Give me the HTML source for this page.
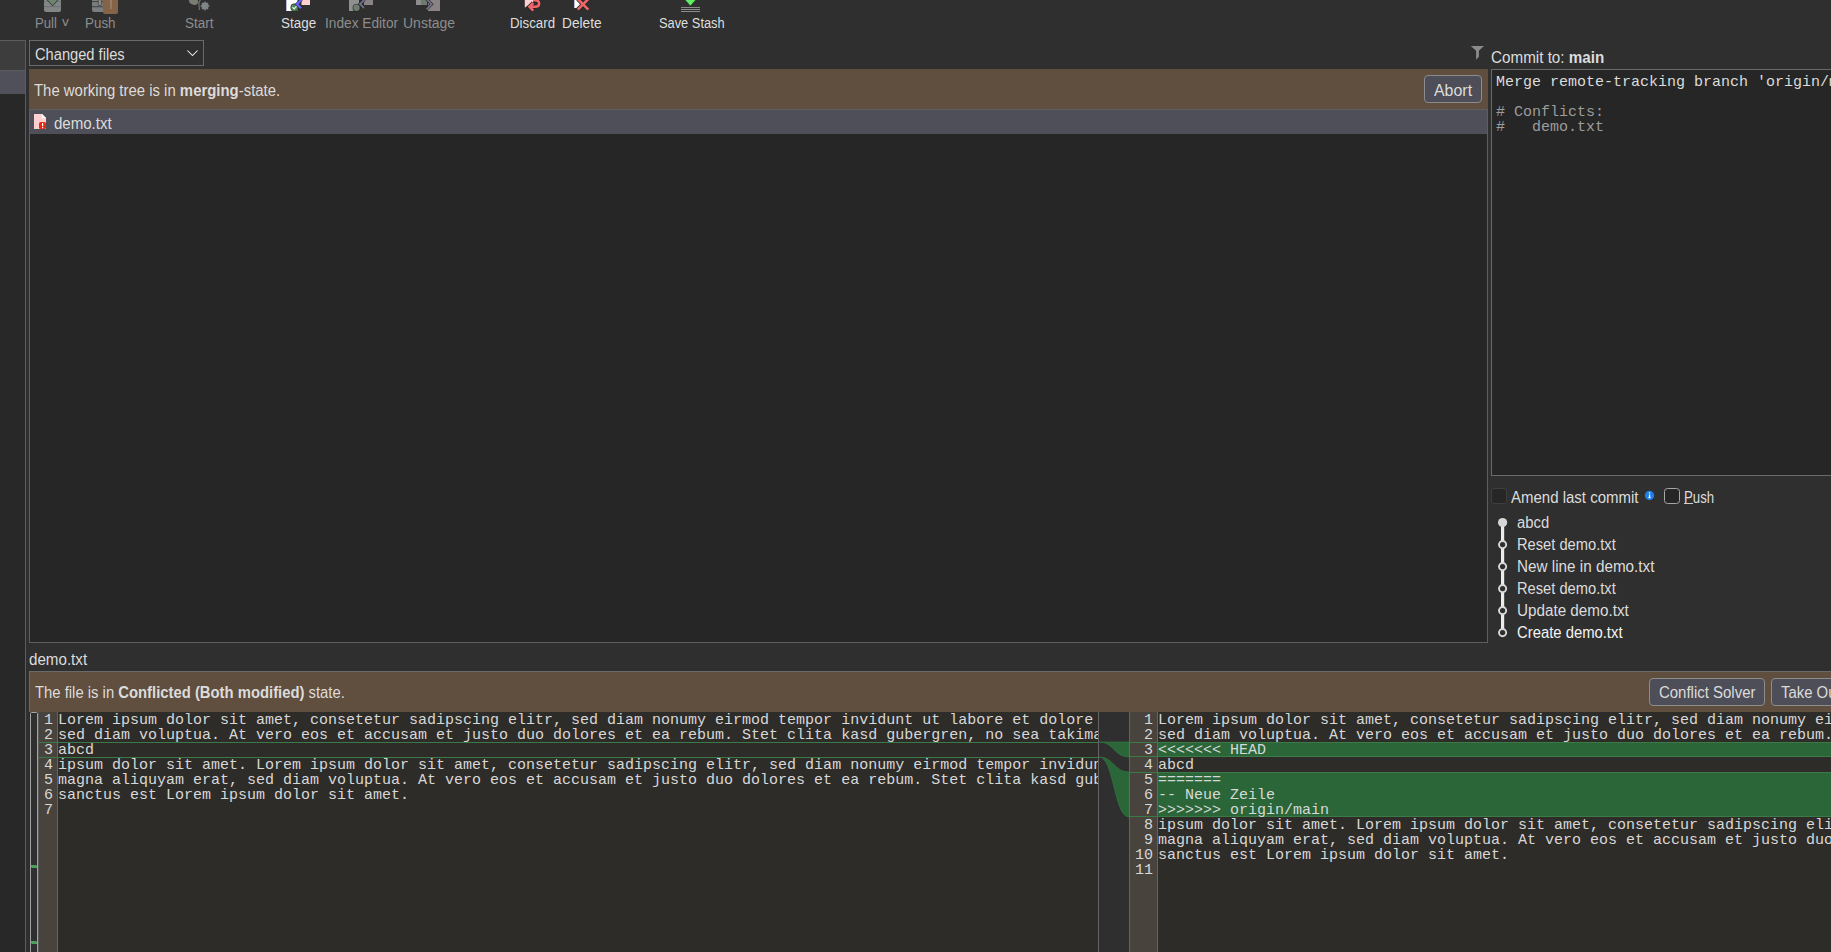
<!DOCTYPE html>
<html><head><meta charset="utf-8">
<style>
*{margin:0;padding:0;box-sizing:border-box}
html,body{width:1831px;height:952px;overflow:hidden;background:#2f2f2f;font-family:"Liberation Sans",sans-serif;color:#dcdcdc}
.a{position:absolute}
.t{position:absolute;white-space:pre;font-size:16px;line-height:17px;transform-origin:0 0}
.tb{position:absolute;white-space:pre;font-size:14px;line-height:15px;top:16px;transform-origin:0 0}
.dis{color:#8d8d8d}
.en{color:#dedede}
.mono{font-family:"Liberation Mono",monospace;font-size:15px;line-height:15px;white-space:pre}
.btn{position:absolute;background:#4d4e57;border:1px solid #8c8c8c;border-radius:4px}
b{font-weight:bold}
</style></head><body>


<!-- toolbar icons -->
<svg class="a" style="left:0;top:0" width="760" height="16">
 <!-- Pull -->
 <g>
  <rect x="44" y="-3" width="17" height="15" rx="2" fill="#838686"/>
  <rect x="44" y="1" width="17" height="0.8" fill="#707272"/>
  <rect x="44" y="6.2" width="17" height="0.9" fill="#6c6e6e"/>
  <path d="M45.9 -1.5 H59.2 L52.55 5.9 Z" fill="#6c846c" stroke="#363936" stroke-width="1"/>
 </g>
 <!-- Push -->
 <g>
  <rect x="92" y="-3" width="13" height="15" rx="2" fill="#7b7e7e"/>
  <rect x="92" y="1.2" width="11" height="0.9" fill="#3a3c3c"/>
  <rect x="92" y="6.3" width="11" height="0.9" fill="#3a3c3c"/>
  <rect x="98.2" y="-1" width="3.4" height="6.5" rx="1" fill="#8f857a" stroke="#3a3c3c" stroke-width="0.7"/>
  <rect x="103" y="-3" width="15" height="17" rx="2" fill="#846347"/>
  <path d="M110 1.5 L111 0.3 V9" stroke="#a89a8c" stroke-width="0.9" fill="none"/>
 </g>
 <!-- Start -->
 <g>
  <ellipse cx="193.6" cy="1.2" rx="4.8" ry="3.6" transform="rotate(20 193.6 1.2)" fill="#797d73"/>
  <path d="M201 -1 C199.5 1 198.5 3 199 5 L199.4 10" stroke="#767a70" stroke-width="1.1" fill="none"/>
  <circle cx="205" cy="6" r="3.6" fill="#7d848c"/>
  <g stroke="#7e8594" stroke-width="1.3">
   <line x1="205" y1="1.6" x2="205" y2="10.4"/><line x1="200.6" y1="6" x2="209.4" y2="6"/>
   <line x1="201.9" y1="2.9" x2="208.1" y2="9.1"/><line x1="201.9" y1="9.1" x2="208.1" y2="2.9"/>
  </g>
  <circle cx="205" cy="6" r="2.8" fill="#7e8582"/>
 </g>
 <!-- Stage -->
 <g>
  <rect x="286" y="-2" width="11.5" height="13" fill="#ffffff"/>
  <rect x="286" y="-2" width="1" height="13" fill="#b8b8d8"/>
  <rect x="301.5" y="-2" width="8.5" height="7" fill="#ffcfcf"/>
  <circle cx="294.5" cy="7.6" r="4" fill="#262626"/>
  <circle cx="294.5" cy="7.6" r="3.4" fill="#4b8a55"/>
  <path d="M292.5 7.2 L294.1 8.9 L296.6 6.2" stroke="#e8f0e8" stroke-width="1.15" fill="none"/>
  <path d="M301.5 -0.5 L297 4.2 L301 8.3" stroke="#262626" stroke-width="3.2" fill="none"/>
  <path d="M301.5 -0.5 L297 4.2 L301 8.3" stroke="#6464ff" stroke-width="2.2" fill="none"/>
 </g>
 <!-- Index Editor -->
 <g>
  <rect x="349" y="-2" width="10" height="13" fill="#8f8f8f"/>
  <rect x="364" y="-2" width="9" height="7" fill="#8a8383"/>
  <circle cx="356.5" cy="7.8" r="3.9" fill="#262626"/>
  <circle cx="356.5" cy="7.8" r="3.2" fill="#6f7d6f"/>
  <path d="M364.5 -0.5 L360 4 L364 8" stroke="#262626" stroke-width="3" fill="none"/>
  <path d="M364.5 -0.5 L360 4 L364 8" stroke="#6f6f8c" stroke-width="1.8" fill="none"/>
 </g>
 <!-- Unstage -->
 <g>
  <rect x="416" y="-2" width="6" height="7" fill="#8d8d8d"/>
  <rect x="421" y="-2" width="6" height="7" fill="#6f7b6f"/>
  <rect x="428" y="-2" width="12" height="13" fill="#8a8383"/>
  <path d="M426.5 -1 L431.5 4.2 L426.5 9.3" stroke="#262626" stroke-width="3" fill="none"/>
  <path d="M426.5 -1 L431.5 4.2 L426.5 9.3" stroke="#70708e" stroke-width="1.8" fill="none"/>
 </g>
 <!-- Discard -->
 <g>
  <path d="M524.8 -2 H533 V2 L525 7.5 H524.8 Z" fill="#ffd0d0"/>
  <g stroke="#262626" stroke-width="4.2" fill="none" stroke-linejoin="miter">
   <path d="M530 6.8 H535 C540.5 6.8 540.5 0.3 535 0.3 H533"/>
   <path d="M533.3 3 L529.5 6.8 L533.3 10.6"/>
  </g>
  <g stroke="#f0666a" stroke-width="2.6" fill="none" stroke-linejoin="miter">
   <path d="M530 6.8 H535 C540.5 6.8 540.5 0.3 535 0.3 H533"/>
   <path d="M533.3 3 L529.5 6.8 L533.3 10.6"/>
  </g>
 </g>
 <!-- Delete -->
 <g>
  <path d="M574 -2 H578 L580 4.5 L576.5 8 H574 Z" fill="#ffffff"/>
  <rect x="574" y="-2" width="1" height="10" fill="#b8b8d8"/>
  <path d="M577.8 -1 L588.3 9.6 M588.3 -1 L577.8 9.6" stroke="#262626" stroke-width="4"/>
  <path d="M577.8 -1 L588.3 9.6 M588.3 -1 L577.8 9.6" stroke="#f0666a" stroke-width="2.6"/>
 </g>
 <!-- Save Stash -->
 <g>
  <path d="M683.8 -1.5 H697 L690.4 6 Z" fill="#62ee62" stroke="#263826" stroke-width="0.6"/>
  <rect x="681" y="7" width="19" height="1" fill="#8c8c8c"/>
  <rect x="681" y="9" width="19" height="1" fill="#8c8c8c"/>
  <rect x="681" y="11" width="19" height="1" fill="#8c8c8c"/>
 </g>
</svg>

<!-- toolbar labels -->
<div class="tb dis" style="left:35px;transform:scaleX(0.94)">Pull</div>
<div class="tb dis" style="left:85px;transform:scaleX(0.957)">Push</div>
<div class="tb dis" style="left:185px;transform:scaleX(0.962)">Start</div>
<div class="tb en" style="left:281px;transform:scaleX(0.96)">Stage</div>
<div class="tb dis" style="left:325px;transform:scaleX(0.978)">Index Editor</div>
<div class="tb dis" style="left:403px;transform:scaleX(1.0)">Unstage</div>
<div class="tb en" style="left:510px;transform:scaleX(0.95)">Discard</div>
<div class="tb en" style="left:562px;transform:scaleX(0.977)">Delete</div>
<div class="tb en" style="left:659px;transform:scaleX(0.917)">Save Stash</div>
<div class="tb dis" style="left:61.5px;top:15px;font-size:12.5px;transform:scale(1.1,1.0)">v</div>

<!-- left sidebar -->
<div class="a" style="left:0;top:40px;width:26px;height:912px;background:#282828;border-top:1px solid #5c5c5c;border-right:1px solid #5c5c5c"></div>
<div class="a" style="left:0;top:41px;width:25px;height:29px;background:#3d3d3d"></div>
<div class="a" style="left:0;top:70px;width:25px;height:1px;background:#5c5c5c"></div>
<div class="a" style="left:0;top:71px;width:25px;height:23px;background:#4f505a"></div>

<!-- combo -->
<div class="a" style="left:29px;top:40px;width:175px;height:26px;border:1px solid #6a6a6a;background:#2f2f2f"></div>
<div class="t" style="left:35px;top:46px;transform:scaleX(0.916)">Changed files</div>
<svg class="a" style="left:186px;top:49px" width="13" height="8"><path d="M1.4 1.5 L6.5 6.6 L11.6 1.5" stroke="#f0f0f0" stroke-width="1.05" fill="none"/></svg>

<!-- merging banner -->
<div class="a" style="left:29px;top:69px;width:1459px;height:40px;background:#604e3e"></div>
<div class="t" style="left:34px;top:82px;transform:scaleX(0.932)">The working tree is in <b>merging</b>-state.</div>
<div class="btn" style="left:1424px;top:75px;width:58px;height:28px"></div>
<div class="t" style="left:1434px;top:82px;transform:scaleX(0.995)">Abort</div>

<!-- file list -->
<div class="a" style="left:29px;top:109px;width:1459px;height:534px;background:#262626;border:1px solid #5e5e5e"></div>
<div class="a" style="left:30px;top:110px;width:1457px;height:24px;background:#4e4f58"></div>
<svg class="a" style="left:33px;top:113px" width="14" height="17">
 <path d="M1 1 H9 L13 5 V16 H1 Z" fill="#ffd0d0"/>
 <path d="M9 1 V5 H13" fill="#fff" stroke="#fff" stroke-width="0.5"/>
 <rect x="6" y="9" width="7" height="7" rx="1.5" fill="#e62a12"/>
 <rect x="9" y="10" width="1.2" height="3.2" fill="#fff"/><rect x="9" y="14" width="1.2" height="1.2" fill="#fff"/>
</svg>
<div class="t" style="left:54px;top:115px;transform:scaleX(0.94)">demo.txt</div>

<!-- commit panel -->
<svg class="a" style="left:1466px;top:42px" width="24" height="22"><path d="M4.8 4 H17.9 L12.9 8.8 V14.8 L10.1 17.8 V8.8 Z" fill="#8c8c8c"/></svg>
<div class="t" style="left:1491px;top:49px;transform:scaleX(0.951)">Commit to: <b>main</b></div>
<div class="a" style="left:1491px;top:69px;width:345px;height:407px;background:#262626;border:1px solid #6a6a6a"></div>
<div class="a mono" style="left:1496px;top:75px;color:#dcdcdc">Merge remote-tracking branch 'origin/main'</div>
<div class="a mono" style="left:1496px;top:105px;color:#9c9c9c"># Conflicts:
#   demo.txt</div>

<div class="a" style="left:1491px;top:488px;width:16px;height:16px;border:1px solid #3e3e3e;border-radius:3px;background:#262626"></div>
<div class="t" style="left:1511px;top:489px;transform:scaleX(0.937)">Amend last commit</div>
<svg class="a" style="left:1644px;top:490px" width="11" height="11"><circle cx="5.5" cy="5.5" r="4.7" fill="#1f7ee6"/><rect x="4.9" y="4.6" width="1.3" height="3.4" fill="#fff"/><rect x="4.2" y="7.3" width="2.6" height="0.8" fill="#fff"/><rect x="4.9" y="2.4" width="1.3" height="1.3" fill="#fff"/></svg>
<div class="a" style="left:1664px;top:488px;width:16px;height:16px;border:1.5px solid #a8a8a8;border-radius:3.5px;background:#262626"></div>
<div class="t" style="left:1684px;top:489px;transform:scaleX(0.828)">Push</div>
<div class="a" style="left:1684px;top:503px;width:9px;height:1px;background:#cfcfcf"></div>

<svg class="a" style="left:1490px;top:510px" width="25" height="135">
 <rect x="11" y="12" width="3.2" height="110" fill="#ececec"/>
 <circle cx="12.6" cy="12.5" r="4.6" fill="#d6d6d6"/>
 <g fill="#2f2f2f" stroke="#dadada" stroke-width="1.9">
  <circle cx="12.6" cy="34.6" r="3.6"/>
  <circle cx="12.6" cy="56.6" r="3.6"/>
  <circle cx="12.6" cy="78.6" r="3.6"/>
  <circle cx="12.6" cy="100.6" r="3.6"/>
  <circle cx="12.6" cy="122.6" r="3.6"/>
 </g>
</svg>
<div class="t" style="left:1517px;top:514px;transform:scaleX(0.926)">abcd</div>
<div class="t" style="left:1517px;top:536px;transform:scaleX(0.918)">Reset demo.txt</div>
<div class="t" style="left:1517px;top:558px;transform:scaleX(0.954)">New line in demo.txt</div>
<div class="t" style="left:1517px;top:580px;transform:scaleX(0.918)">Reset demo.txt</div>
<div class="t" style="left:1517px;top:602px;transform:scaleX(0.952)">Update demo.txt</div>
<div class="t" style="left:1517px;top:624px;color:#f4f4f4;transform:scaleX(0.927)">Create demo.txt</div>

<!-- demo.txt label -->
<div class="t" style="left:29px;top:651px;transform:scaleX(0.947)">demo.txt</div>

<!-- conflict banner -->
<div class="a" style="left:29px;top:671px;width:1802px;height:41px;background:#604e3e;border-top:1px solid #6a6a6a;border-left:1px solid #6a6a6a"></div>
<div class="t" style="left:35px;top:684px;transform:scaleX(0.927)">The file is in <b>Conflicted (Both modified)</b> state.</div>
<div class="btn" style="left:1649px;top:678px;width:116px;height:28px"></div>
<div class="t" style="left:1659px;top:684px;transform:scaleX(0.935)">Conflict Solver</div>
<div class="btn" style="left:1771px;top:678px;width:100px;height:28px"></div>
<div class="t" style="left:1781px;top:684px;transform:scaleX(0.93)">Take Ours</div>

<!-- editors -->
<div class="a" style="left:29px;top:712px;width:1802px;height:240px;background:#2e2c29"></div>
<!-- left overview strip -->
<div class="a" style="left:29px;top:712px;width:10px;height:240px;background:#2b2b2b"></div>
<div class="a" style="left:30px;top:712px;width:8px;height:245px;background:#2f2f2f;border:1px solid #a4a4a4;border-radius:1.5px"></div>
<div class="a" style="left:38px;top:712px;width:1px;height:240px;background:#5a5a5a"></div>
<!-- left gutter -->
<div class="a" style="left:39px;top:712px;width:19px;height:240px;background:#48443d;border-right:1px solid #646464"></div>
<!-- left code -->
<div class="a" style="left:58px;top:712px;width:1041px;height:240px;overflow:hidden">
</div>
<!-- middle -->
<div class="a" style="left:1098px;top:712px;width:32px;height:240px;background:#2f2f2f;border-left:1px solid #646464;border-right:1px solid #646464"></div>
<!-- right gutter -->
<div class="a" style="left:1130px;top:712px;width:28px;height:240px;background:#48443d;border-right:1px solid #646464"></div>


<!-- left green lines -->
<div class="a" style="left:39px;top:742px;width:1059px;height:1px;background:#3b7a47"></div>
<div class="a" style="left:39px;top:757px;width:1059px;height:1px;background:#3b7a47"></div>
<!-- right green fills -->
<div class="a" style="left:1158px;top:742px;width:673px;height:15px;background:#2a6638"></div>
<div class="a" style="left:1158px;top:772px;width:673px;height:45px;background:#2a6638"></div>
<div class="a" style="left:1130px;top:742px;width:701px;height:1px;background:#3b7a47"></div>
<div class="a" style="left:1130px;top:756px;width:701px;height:1px;background:#3b7a47"></div>
<div class="a" style="left:1130px;top:772px;width:701px;height:1px;background:#3b7a47"></div>
<div class="a" style="left:1130px;top:816px;width:701px;height:1px;background:#3b7a47"></div>
<!-- connector -->
<svg class="a" style="left:1099px;top:712px" width="30" height="240">
 <path d="M0 30 H30 V45 C15 45 15 30 0 30 Z" fill="#2a6638" stroke="#357a45" stroke-width="0.6"/>
 <path d="M0 45 C15 45 15 60 30 60 V105 C15 105 15 45 0 45 Z" fill="#2a6638" stroke="#357a45" stroke-width="0.6"/>
</svg>
<div class="a mono" style="left:39px;top:713px;width:19px;padding-right:5px;text-align:right;color:#d8d8d8">1
2
3
4
5
6
7</div>
<div class="a mono" style="left:1130px;top:713px;width:27px;padding-right:4px;text-align:right;color:#d8d8d8">1
2
3
4
5
6
7
8
9
10
11</div>
<div class="a mono" style="left:58px;top:713px;width:1040px;height:240px;overflow:hidden;color:#d8d8d8">Lorem ipsum dolor sit amet, consetetur sadipscing elitr, sed diam nonumy eirmod tempor invidunt ut labore et dolore magna aliquyam erat,
sed diam voluptua. At vero eos et accusam et justo duo dolores et ea rebum. Stet clita kasd gubergren, no sea takimata sanctus est
abcd
ipsum dolor sit amet. Lorem ipsum dolor sit amet, consetetur sadipscing elitr, sed diam nonumy eirmod tempor invidunt ut labore et
magna aliquyam erat, sed diam voluptua. At vero eos et accusam et justo duo dolores et ea rebum. Stet clita kasd gubergren, no sea
sanctus est Lorem ipsum dolor sit amet.
</div>
<div class="a mono" style="left:1158px;top:713px;width:673px;height:239px;overflow:hidden;color:#d8d8d8">Lorem ipsum dolor sit amet, consetetur sadipscing elitr, sed diam nonumy eirmod tempor invidunt ut labore et dolore magna aliquyam erat,
sed diam voluptua. At vero eos et accusam et justo duo dolores et ea rebum. Stet clita kasd gubergren, no sea takimata sanctus est
&lt;&lt;&lt;&lt;&lt;&lt;&lt; HEAD
abcd
=======
-- Neue Zeile
&gt;&gt;&gt;&gt;&gt;&gt;&gt; origin/main
ipsum dolor sit amet. Lorem ipsum dolor sit amet, consetetur sadipscing elitr, sed diam nonumy eirmod tempor invidunt ut labore et
magna aliquyam erat, sed diam voluptua. At vero eos et accusam et justo duo dolores et ea rebum. Stet clita kasd gubergren, no sea
sanctus est Lorem ipsum dolor sit amet.
</div>
<!-- overview markers -->
<svg class="a" style="left:31px;top:864px" width="6" height="81"><path d="M0 1 H5 L6 2 V4 H1 L0 3 Z" fill="#4c9f5c"/><path d="M0 77 H5 L6 78 V80 H1 L0 79 Z" fill="#4c9f5c"/></svg>

</body></html>
